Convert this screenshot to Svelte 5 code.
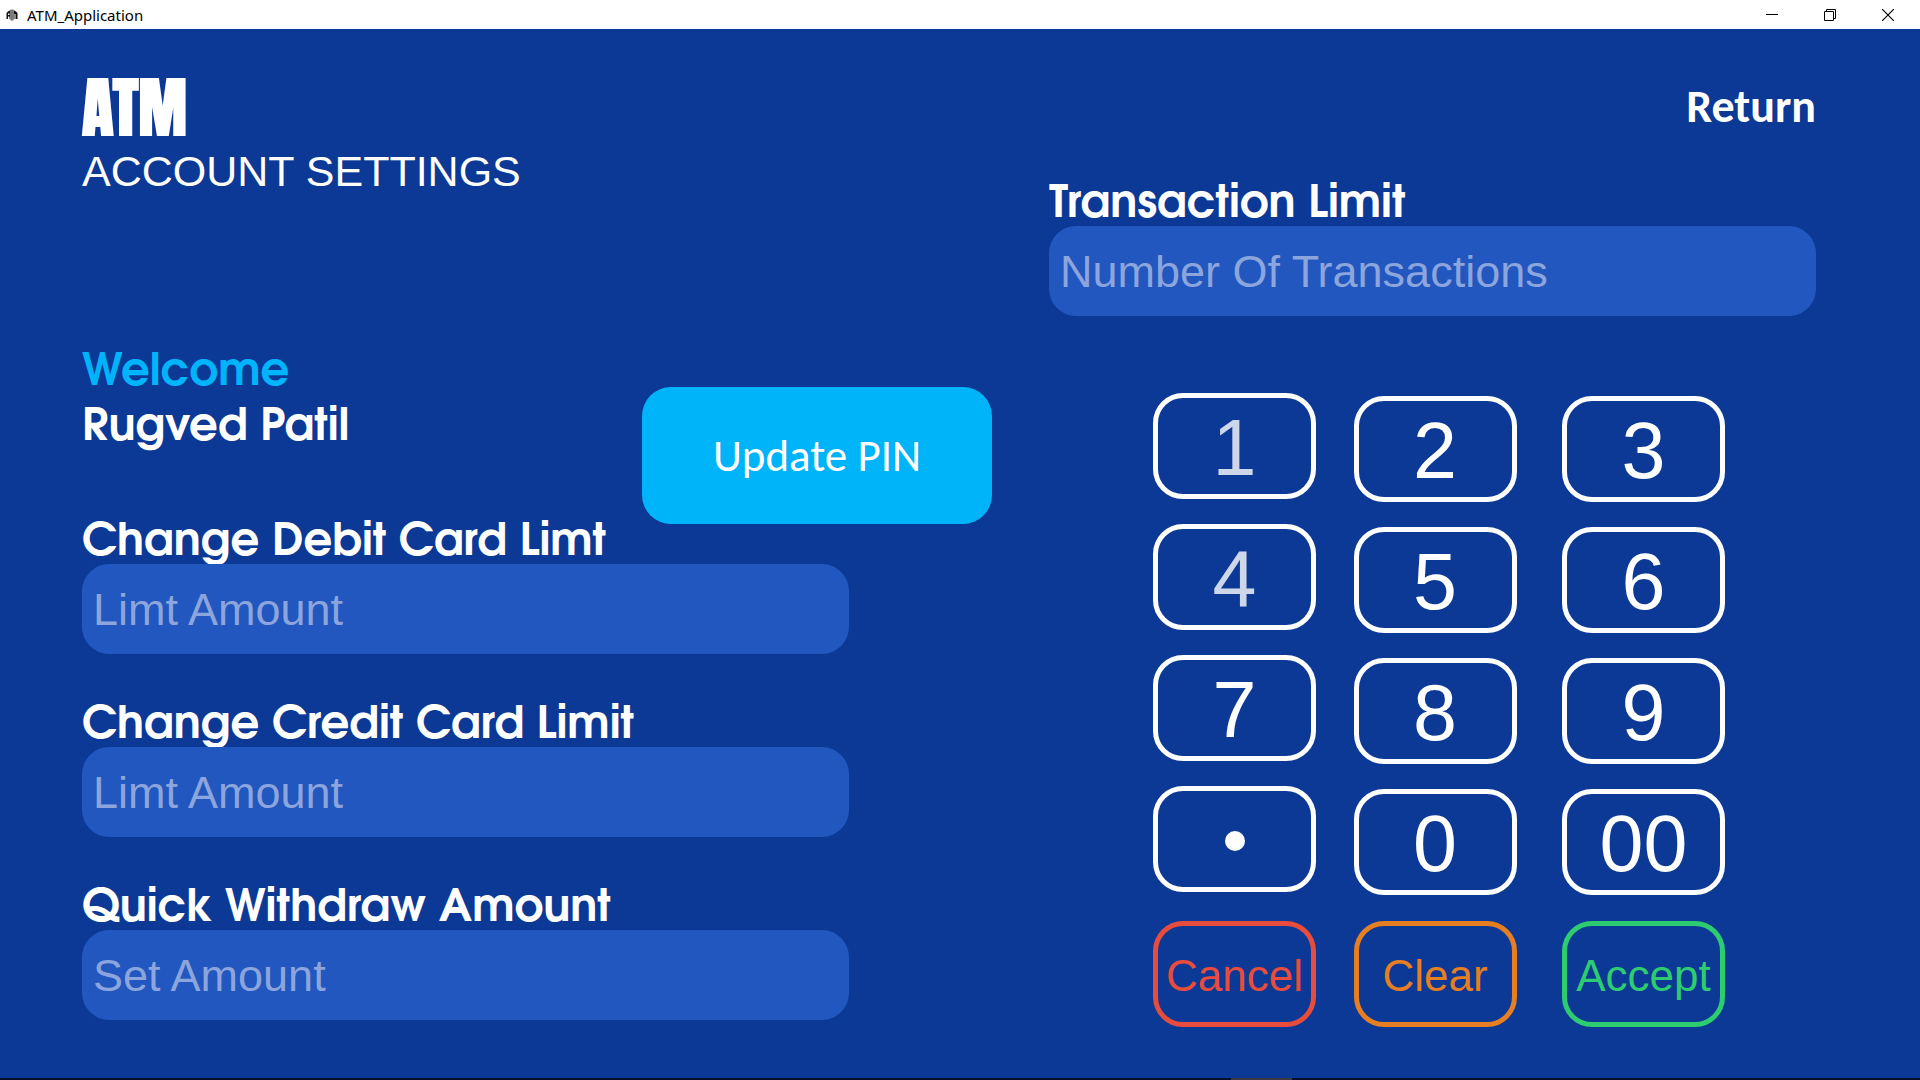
<script>
  const fields = [
    { id: 'debit', label: 'Change Debit Card Limt', hint: 'Limt Amount' },
    { id: 'credit', label: 'Change Credit Card Limit', hint: 'Limt Amount' },
    { id: 'quick', label: 'Quick Withdraw Amount', hint: 'Set Amount' }
  ];

  const columns = [
    { name: 'first', keys: ['1', '4', '7', '•'], action: 'Cancel' },
    { name: 'second', keys: ['2', '5', '8', '0'], action: 'Clear' },
    { name: 'third', keys: ['3', '6', '9', '00'], action: 'Accept' }
  ];
  const dimmed = ['1', '4'];
</script>

<div class="window">
  <header class="titlebar">
    <svg class="app-icon" width="12" height="12" viewBox="0 0 12 12" aria-hidden="true">
      <path d="M2 2.500 4.500 1v9.500L3.500 10V7.500H2V10H0.500V4zM10 2.500 7.500 1v9.500L8.500 10V5H9.500V10H11.500V4z" fill="#111" />
      <path d="M4.500 0.500h3v11h-3z" fill="#777" />
      <path d="M2 4.500h1.500v1.500H2z" fill="#fff" />
    </svg>
    <span class="app-name">ATM_Application</span>
    <div class="controls">
      <button aria-label="Minimize">
        <svg width="12" height="12" viewBox="0 0 12 12"><path d="M0 5.500h12" stroke="#000" /></svg>
      </button>
      <button aria-label="Restore">
        <svg width="12" height="12" viewBox="0 0 12 12" fill="none" stroke="#000">
          <path d="M0.500 2.500h9v9h-9zM2.500 2.500v-2h9v9h-2" />
        </svg>
      </button>
      <button aria-label="Close">
        <svg width="12" height="12" viewBox="0 0 12 12"><path d="M0 0l12 12M12 0L0 12" stroke="#000" stroke-width="1.200" /></svg>
      </button>
    </div>
  </header>

  <main>
    <section class="left">
      <h1>ATM</h1>
      <h2>ACCOUNT SETTINGS</h2>
      <div class="user-row">
        <p class="user"><span class="welcome">Welcome</span><span>Rugved Patil</span></p>
        <button class="pin">Update PIN</button>
      </div>
      <div class="fields">
        {#each fields as f}
          <div class="field">
            <label for={f.id}>{f.label}</label>
            <input id={f.id} type="text" placeholder={f.hint} />
          </div>
        {/each}
      </div>
    </section>

    <section class="right">
      <button class="return">Return</button>
      <div class="field">
        <label for="limit">Transaction Limit</label>
        <input id="limit" type="text" placeholder="Number Of Transactions" />
      </div>
      <div class="keypad">
        {#each columns as col}
          <div class="column {col.name}">
            {#each col.keys as k}
              <button class="key" class:dim={dimmed.includes(k)} aria-label={k === '•' ? 'Decimal point' : k}>
                {#if k === '•'}<span class="dot"></span>{:else}{k}{/if}
              </button>
            {/each}
            <button class="key action {col.action.toLowerCase()}">{col.action}</button>
          </div>
        {/each}
      </div>
    </section>
  </main>
  <footer class="taskbar"><span class="task"></span></footer>
</div>

<style>
  :global(body) {
    margin: 0;
    background: #0b3995;
  }
  .window {
    --geometric: 'Century Gothic', 'URW Gothic', 'TeX Gyre Adventor', Outfit, Jost, Poppins, Montserrat, Inter, sans-serif;
    min-height: 100vh;
    display: flex;
    flex-direction: column;
    background: #0b3995;
    color: #fff;
    font-family: 'Liberation Sans', Arial, sans-serif;
  }
  button {
    border: 0;
    padding: 0;
    background: none;
    color: inherit;
    font: inherit;
    cursor: pointer;
  }
  .titlebar {
    height: 29px;
    display: flex;
    align-items: center;
    padding-left: 6px;
    background: #fff;
    color: #000;
  }
  .app-name {
    margin-left: 9px;
    font: 15px/20px 'Segoe UI', Selawik, 'Noto Sans', sans-serif;
  }
  .controls {
    margin-left: auto;
    display: flex;
    padding-right: 3px;
  }
  .controls button {
    width: 58px;
    height: 28px;
    display: flex;
    align-items: center;
    justify-content: center;
  }
  main {
    flex: 1;
    display: grid;
    grid-template-columns: 910fr 767fr;
    column-gap: 57px;
    padding: 0 104px 51px 82px;
  }
  h1 {
    margin: 48px 0 0;
    font: bold 65px/62px Impact, Anton, 'Liberation Sans', sans-serif;
  }
  h2 {
    margin: 8px 0 0;
    font-size: 43px;
    font-weight: normal;
    line-height: 48px;
  }
  .user-row {
    display: flex;
    justify-content: space-between;
    align-items: flex-end;
    margin-top: 150px;
  }
  .user {
    margin: 0;
    align-self: flex-start;
    display: flex;
    flex-direction: column;
    font: bold 45px/55px var(--geometric);
  }
  .welcome {
    color: #00b4fa;
  }
  .pin {
    width: 350px;
    height: 137px;
    margin-top: 42px;
    border-radius: 29px;
    background: #00b4fa;
    font: 45px Carlito, 'Open Sans', sans-serif;
  }
  .fields {
    display: flex;
    flex-direction: column;
    gap: 53px;
    margin-right: 143px;
  }
  .field {
    display: flex;
    flex-direction: column;
  }
  label {
    padding-bottom: 2px;
    font: bold 45px/38px var(--geometric);
    white-space: nowrap;
  }
  input {
    width: 100%;
    height: 90px;
    box-sizing: border-box;
    padding: 2px 11px 0;
    border: 0;
    border-radius: 27px;
    background: #2257bf;
    color: #fff;
    font: 45px 'Liberation Sans', Arial, sans-serif;
  }
  input::placeholder {
    color: #8ca5dc;
    opacity: 1;
  }
  .right {
    display: flex;
    flex-direction: column;
  }
  .return {
    align-self: flex-end;
    margin: 52px 0 55px;
    font: bold 46px/50px Carlito, 'Open Sans', sans-serif;
  }
  .keypad {
    flex: 1;
    display: flex;
    justify-content: space-between;
    margin-top: 77px;
    padding: 0 91px 0 104px;
  }
  .column {
    display: flex;
    flex-direction: column;
    gap: 25px;
  }
  .second,
  .third {
    padding-top: 3px;
  }
  .second {
    padding-right: 8px;
  }
  .key {
    width: 163px;
    height: 106px;
    display: flex;
    align-items: center;
    justify-content: center;
    padding-top: 4px;
    border: 5px solid #fff;
    border-radius: 30px;
    font-size: 79px;
    line-height: 90px;
  }
  .dim {
    color: #ced6ea;
  }
  .dot {
    width: 20px;
    height: 20px;
    border-radius: 50%;
    background: #fff;
  }
  .action {
    margin-top: auto;
    font-size: 44px;
  }
  .cancel {
    color: #e74c3c;
    border-color: #e74c3c;
  }
  .clear {
    color: #e67e22;
    border-color: #e67e22;
  }
  .accept {
    color: #2ecc71;
    border-color: #2ecc71;
  }
  .taskbar {
    height: 2px;
    display: flex;
    justify-content: center;
    background: #04102b;
  }
  .task {
    width: 61px;
    margin-left: 603px;
    background: #3c3a42;
  }
</style>
